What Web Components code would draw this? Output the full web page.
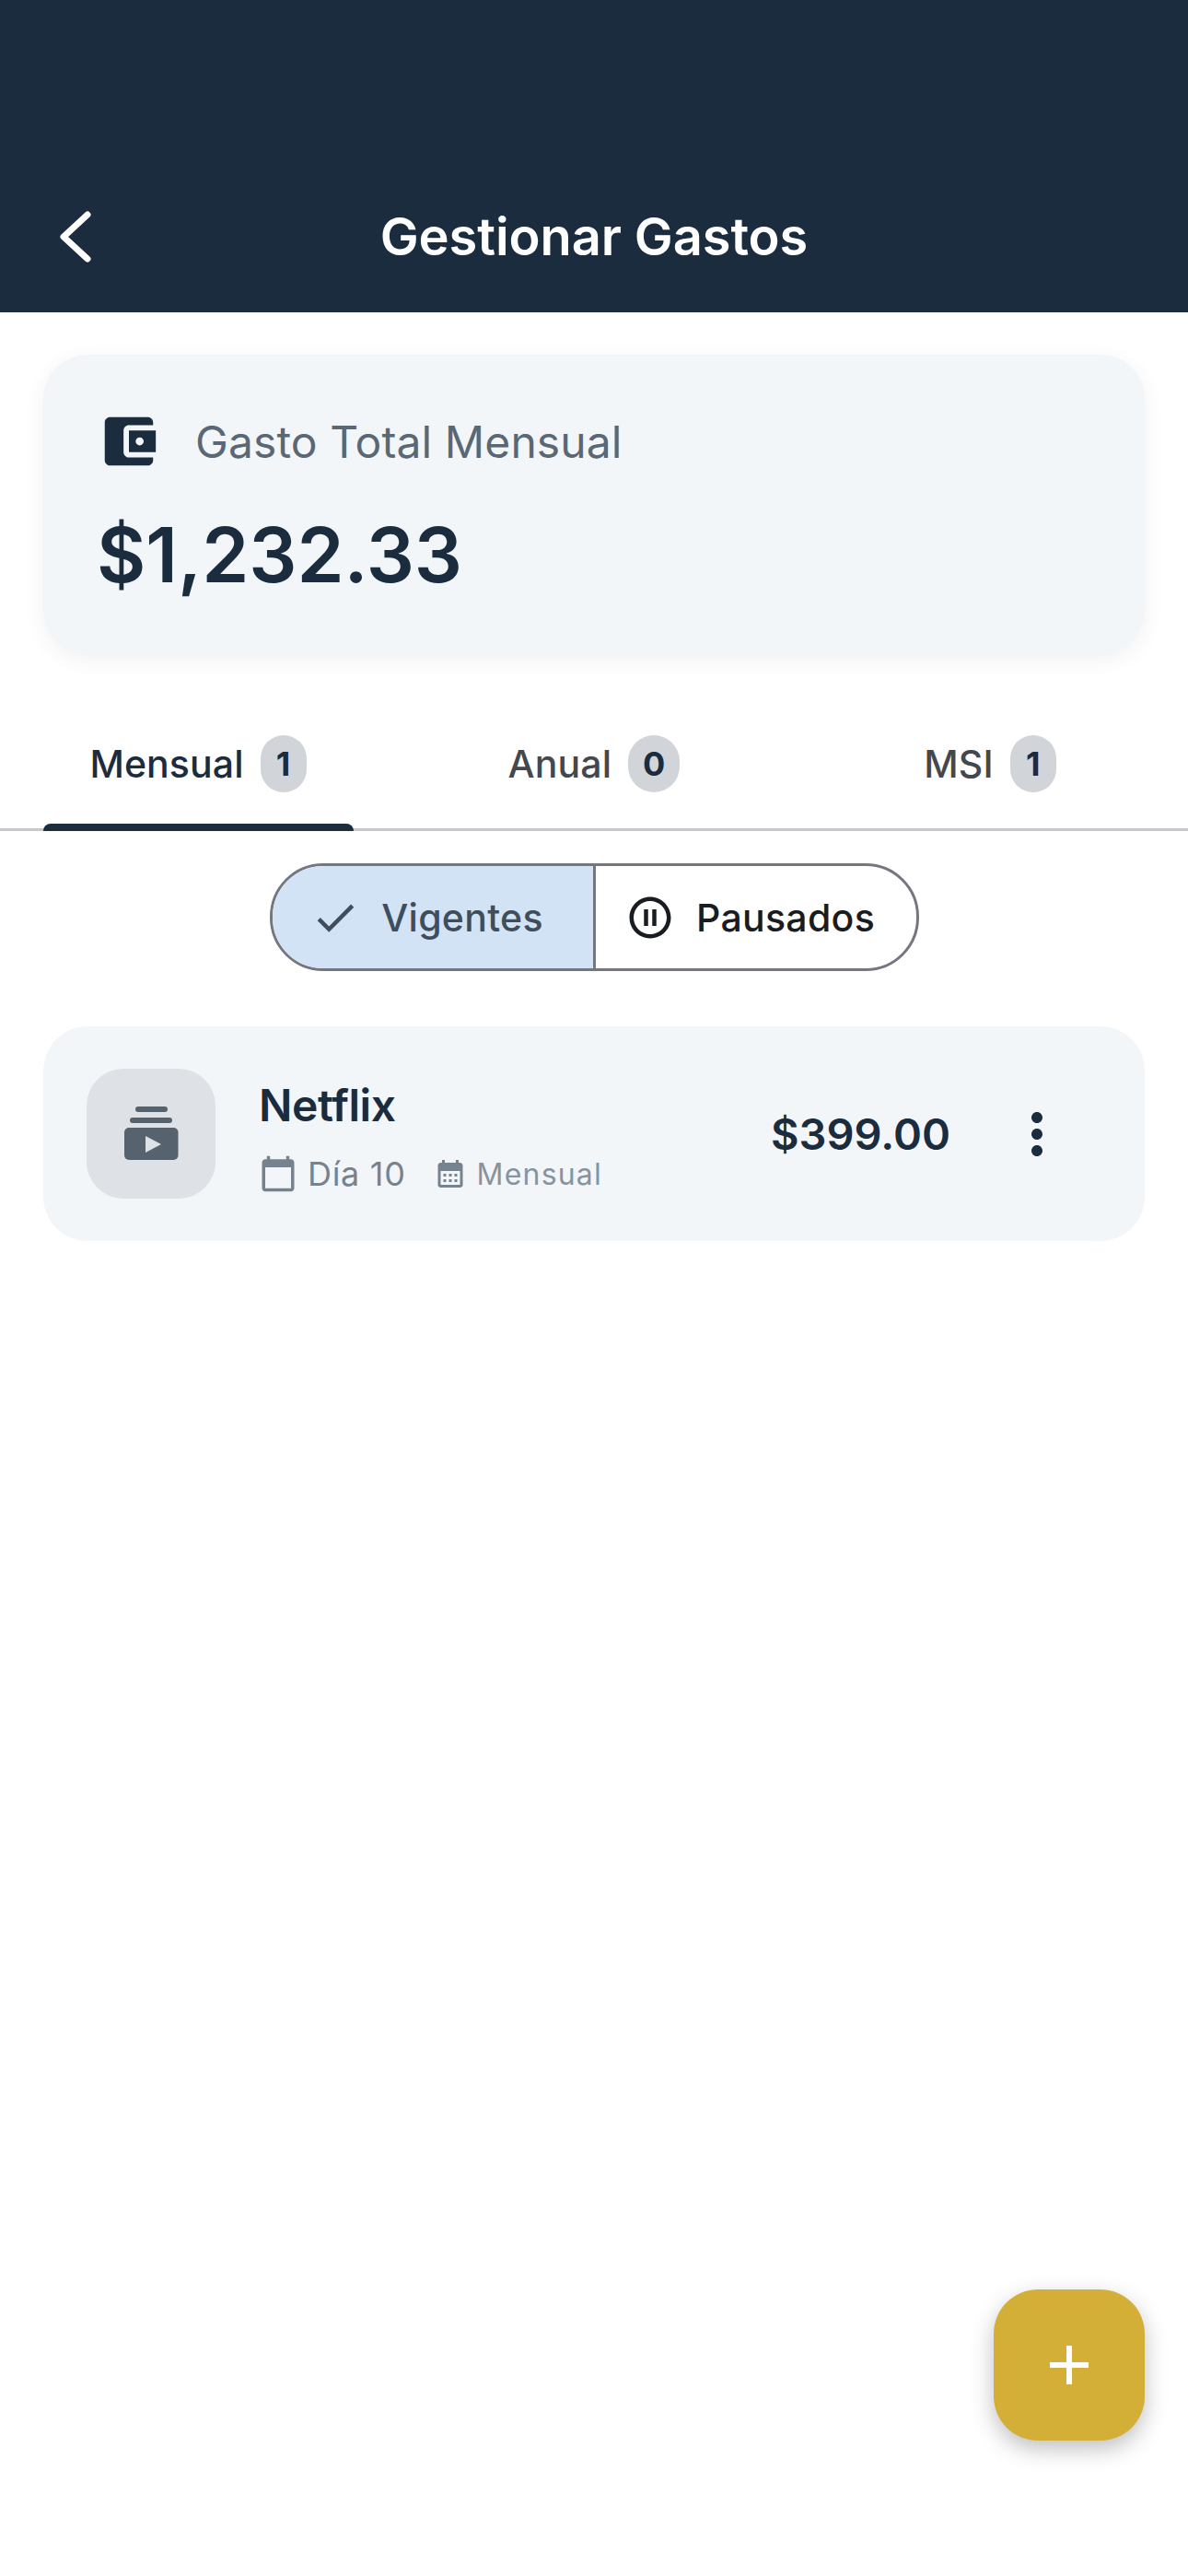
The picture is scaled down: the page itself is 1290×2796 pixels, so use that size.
<!DOCTYPE html>
<html lang="es">
<head>
<meta charset="utf-8">
<title>Gestionar Gastos</title>
<style>
    html, body {
        margin: 0;
        background: #fff;
        font-family: 'Inter', 'Liberation Sans', sans-serif;
    }
    body {
        position: relative;
        height: 2796px;
        overflow: hidden;
        display: flex;
        flex-direction: column;
    }
</style>
</head>
<body>
<app-header>Gestionar Gastos</app-header>
<total-card label="Gasto Total Mensual" amount="$1,232.33"></total-card>
<tab-bar>
    <tab-item count="1" active>Mensual</tab-item>
    <tab-item count="0">Anual</tab-item>
    <tab-item count="1">MSI</tab-item>
</tab-bar>
<status-switch></status-switch>
<expense-row name="Netflix" amount="$399.00" day="Día 10" period="Mensual"></expense-row>
<add-fab></add-fab>

<script>
const appHeader = document.createElement('template');
appHeader.innerHTML = `
<style>
    :host {
        display: flex;
        align-items: center;
        justify-content: center;
        position: relative;
        box-sizing: border-box;
        height: 339px;
        padding-top: 174px;
        background-color: #1a2c3d;
        color: #fff;
        font-size: 56px;
        font-weight: 600;
        letter-spacing: -0.1px;
    }
    svg {
        position: absolute;
        left: 60px;
        top: 224px;
    }
</style>
<svg width="48" height="66" viewBox="0 0 48 66" fill="none" stroke="#fff" stroke-width="7" stroke-linecap="round" stroke-linejoin="round">
    <path d="M35 9 L9 33 L35 57"/>
</svg>
<slot></slot>
`;

class AppHeader extends HTMLElement {
    constructor() {
        super();
        this.attachShadow({mode: 'open'}).append(appHeader.content.cloneNode(true));
    }
}
customElements.define('app-header', AppHeader);

const totalCard = document.createElement('template');
totalCard.innerHTML = `
<style>
    :host {
        display: block;
        box-sizing: border-box;
        height: 325px;
        margin: 46px 47px 0;
        padding: 59px 58px 0;
        border-radius: 48px;
        background-color: #f3f6f9;
        box-shadow: 0 6px 24px rgba(0, 0, 0, 0.06);
    }
    .head {
        display: flex;
        align-items: center;
        gap: 37px;
        color: #5a6875;
        font-size: 48px;
        letter-spacing: 0.1px;
    }
    svg {
        display: block;
        fill: #1a2c3d;
    }
    .amount {
        margin-top: 39px;
        color: #1a2c3d;
        font-size: 82px;
        font-weight: 600;
    }
</style>
<div class="head">
    <svg width="70" height="70" viewBox="0 0 24 24"><path d="M21 18v1c0 1.1-.9 2-2 2H5c-1.11 0-2-.9-2-2V5c0-1.1.89-2 2-2h14c1.1 0 2 .9 2 2v1h-9c-1.11 0-2 .9-2 2v8c0 1.1.89 2 2 2h9zm-9-2h10V8H12v8zm4-2.5c-.83 0-1.5-.67-1.5-1.5s.67-1.5 1.5-1.5 1.5.67 1.5 1.5-.67 1.5-1.5 1.5z"/></svg>
    <span class="label"></span>
</div>
<div class="amount"></div>
`;

class TotalCard extends HTMLElement {
    constructor() {
        super();
        const shadow = this.attachShadow({mode: 'open'});
        shadow.append(totalCard.content.cloneNode(true));
        shadow.querySelector('.label').textContent = this.getAttribute('label');
        shadow.querySelector('.amount').textContent = this.getAttribute('amount');
    }
}
customElements.define('total-card', TotalCard);

const tabBar = document.createElement('template');
tabBar.innerHTML = `
<style>
    :host {
        display: grid;
        grid-template-columns: repeat(3, 1fr);
        box-sizing: border-box;
        height: 192px;
        border-bottom: 3px solid #c4c7cf;
    }
</style>
<slot></slot>
`;

class TabBar extends HTMLElement {
    constructor() {
        super();
        this.attachShadow({mode: 'open'}).append(tabBar.content.cloneNode(true));
    }
}
customElements.define('tab-bar', TabBar);

const tabItem = document.createElement('template');
tabItem.innerHTML = `
<style>
    :host {
        display: flex;
        align-items: center;
        justify-content: center;
        gap: 18px;
        position: relative;
        padding-top: 48px;
        color: #43484f;
        font-size: 41px;
        font-weight: 500;
        letter-spacing: 0.1px;
    }
    :host([active]) {
        color: #1a2c3d;
    }
    .count {
        display: flex;
        align-items: center;
        justify-content: center;
        box-sizing: border-box;
        min-width: 50px;
        height: 62px;
        padding: 0 16px;
        border-radius: 31px;
        background-color: #d1d5d9;
        color: #1a2c3d;
        font-size: 36px;
        font-weight: 700;
    }
    .bar {
        display: none;
        position: absolute;
        left: 47px;
        right: 46px;
        bottom: -3px;
        height: 8px;
        border-radius: 8px 8px 0 0;
        background-color: #1a2c3d;
    }
    :host([active]) .bar {
        display: block;
    }
</style>
<slot></slot>
<span class="count"></span>
<span class="bar"></span>
`;

class TabItem extends HTMLElement {
    constructor() {
        super();
        const shadow = this.attachShadow({mode: 'open'});
        shadow.append(tabItem.content.cloneNode(true));
        shadow.querySelector('.count').textContent = this.getAttribute('count');
    }
}
customElements.define('tab-item', TabItem);

const statusSwitch = document.createElement('template');
statusSwitch.innerHTML = `
<style>
    :host {
        display: flex;
        box-sizing: border-box;
        align-self: center;
        width: 705px;
        height: 117px;
        margin-top: 35px;
        border: 3px solid #74777f;
        border-radius: 58px;
        overflow: hidden;
        font-size: 41px;
        font-weight: 500;
        letter-spacing: 0.3px;
    }
    .seg {
        flex: 1;
        display: flex;
        align-items: center;
        justify-content: center;
        gap: 23px;
        padding-right: 12px;
    }
    .on {
        background-color: #d3e3f6;
        color: #3f4d5c;
        border-right: 3px solid #74777f;
    }
    .off {
        color: #191c20;
    }
    svg {
        display: block;
        fill: currentColor;
    }
</style>
<div class="seg on">
    <svg width="54" height="54" viewBox="0 0 24 24"><path d="M9 16.17L4.83 12l-1.42 1.41L9 19 21 7l-1.41-1.41z"/></svg>
    <span>Vigentes</span>
</div>
<div class="seg off">
    <svg width="54" height="54" viewBox="0 0 24 24"><path d="M9 16h2V8H9v8zm3-14C6.48 2 2 6.48 2 12s4.48 10 10 10 10-4.48 10-10S17.52 2 12 2zm0 18c-4.41 0-8-3.59-8-8s3.59-8 8-8 8 3.59 8 8-3.59 8-8 8zm1-4h2V8h-2v8z"/></svg>
    <span>Pausados</span>
</div>
`;

class StatusSwitch extends HTMLElement {
    constructor() {
        super();
        this.attachShadow({mode: 'open'}).append(statusSwitch.content.cloneNode(true));
    }
}
customElements.define('status-switch', StatusSwitch);

const expenseRow = document.createElement('template');
expenseRow.innerHTML = `
<style>
    :host {
        display: flex;
        align-items: center;
        box-sizing: border-box;
        height: 233px;
        margin: 60px 47px 0;
        padding: 0 47px;
        border-radius: 48px;
        background-color: #f3f6f9;
    }
    .thumb {
        flex: none;
        display: block;
        width: 140px;
        height: 141px;
        margin-right: 47px;
    }
    .info {
        flex: 1;
        min-width: 0;
        padding-top: 5px;
    }
    .name {
        color: #1a2c3d;
        font-size: 48px;
        font-weight: 600;
        letter-spacing: -0.4px;
    }
    .meta {
        display: flex;
        align-items: center;
        margin-top: 23px;
        color: #76838f;
    }
    .meta svg {
        display: block;
        fill: #76838f;
    }
    .day {
        margin-left: 11px;
        font-size: 36px;
        letter-spacing: 0.7px;
    }
    .period {
        margin-left: 11px;
        font-size: 32px;
        letter-spacing: 1.2px;
        color: #87939e;
    }
    .meta .small {
        margin-left: 30px;
    }
    .amount {
        color: #1a2c3d;
        font-size: 47px;
        font-weight: 600;
        margin-right: 58px;
    }
    .more {
        display: block;
        fill: #1a2c3d;
        margin-right: 34px;
    }
</style>
<svg class="thumb" viewBox="0 0 140 141">
    <rect width="140" height="141" rx="40" fill="#dee1e6"/>
    <rect x="53" y="41" width="35" height="6" rx="3" fill="#56636f"/>
    <rect x="47" y="53" width="46" height="6" rx="3" fill="#56636f"/>
    <rect x="41" y="64" width="58.5" height="35" rx="5" fill="#56636f"/>
    <path d="M64 73 L81 82 L64 91 Z" fill="#dee1e6"/>
</svg>
<div class="info">
    <div class="name"></div>
    <div class="meta">
        <svg width="42" height="42" viewBox="0 0 24 24"><path d="M20 3h-1V1h-2v2H7V1H5v2H4c-1.1 0-2 .9-2 2v16c0 1.1.9 2 2 2h16c1.1 0 2-.9 2-2V5c0-1.1-.9-2-2-2zm0 18H4V8h16v13z"/></svg>
        <span class="day"></span>
        <svg class="small" width="36" height="36" viewBox="0 0 24 24"><path d="M19 4h-1V2h-2v2H8V2H6v2H5C3.9 4 3 4.9 3 6v14c0 1.1.9 2 2 2h14c1.1 0 2-.9 2-2V6c0-1.1-.9-2-2-2zm0 16H5V10h14V20zM9 14H7v-2h2V14zm4 0h-2v-2h2V14zm4 0h-2v-2h2V14zm-8 4H7v-2h2V18zm4 0h-2v-2h2V18zm4 0h-2v-2h2V18z"/></svg>
        <span class="period"></span>
    </div>
</div>
<div class="amount"></div>
<svg class="more" width="72" height="72" viewBox="0 0 24 24"><path d="M12 8c1.1 0 2-.9 2-2s-.9-2-2-2-2 .9-2 2 .9 2 2 2zm0 2c-1.1 0-2 .9-2 2s.9 2 2 2 2-.9 2-2-.9-2-2-2zm0 6c-1.1 0-2 .9-2 2s.9 2 2 2 2-.9 2-2-.9-2-2-2z"/></svg>
`;

class ExpenseRow extends HTMLElement {
    constructor() {
        super();
        const shadow = this.attachShadow({mode: 'open'});
        shadow.append(expenseRow.content.cloneNode(true));
        shadow.querySelector('.name').textContent = this.getAttribute('name');
        shadow.querySelector('.amount').textContent = this.getAttribute('amount');
        shadow.querySelector('.day').textContent = this.getAttribute('day');
        shadow.querySelector('.period').textContent = this.getAttribute('period');
    }
}
customElements.define('expense-row', ExpenseRow);

const addFab = document.createElement('template');
addFab.innerHTML = `
<style>
    :host {
        display: flex;
        align-items: center;
        justify-content: center;
        position: absolute;
        left: 1079px;
        top: 2485px;
        width: 164px;
        height: 164px;
        border-radius: 48px;
        background-color: #d4af37;
        box-shadow: 0 9px 24px rgba(0, 0, 0, 0.25);
    }
    svg {
        display: block;
    }
</style>
<svg width="42" height="42" viewBox="0 0 42 42" fill="#fff">
    <rect x="18" y="0" width="6" height="42"/>
    <rect x="0" y="18" width="42" height="6"/>
</svg>
`;

class AddFab extends HTMLElement {
    constructor() {
        super();
        this.attachShadow({mode: 'open'}).append(addFab.content.cloneNode(true));
    }
}
customElements.define('add-fab', AddFab);
</script>
</body>
</html>
